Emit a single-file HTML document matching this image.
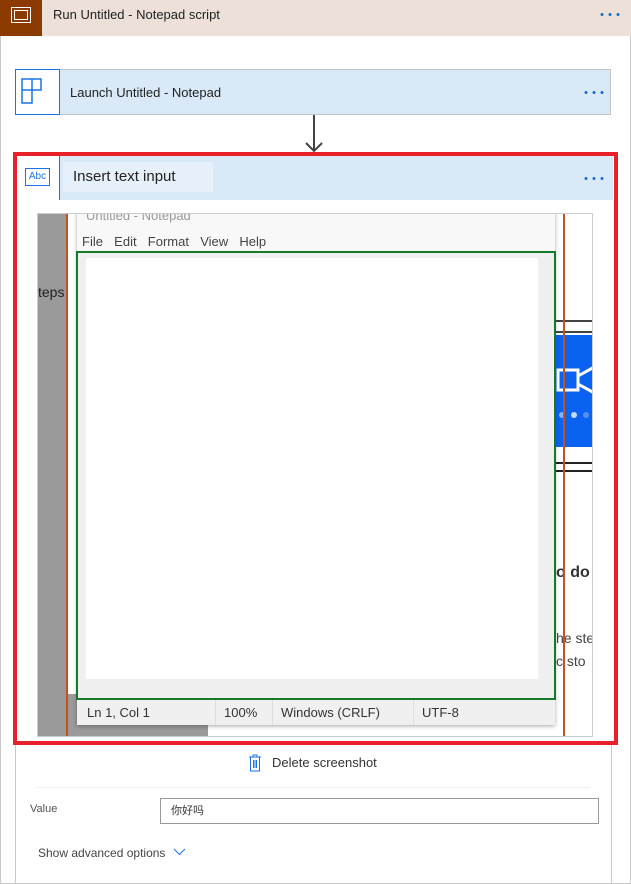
<!DOCTYPE html>
<html><head><meta charset="utf-8"><style>
*{box-sizing:border-box;margin:0;padding:0}
body{width:631px;height:884px;background:#fff;font-family:"Liberation Sans","Noto Sans CJK SC",sans-serif;position:relative;overflow:hidden;color:#333}
.a{position:absolute;white-space:nowrap}
.dots{width:22px;height:3px;background:radial-gradient(circle,#0b6cd0 1.3px,transparent 1.6px) 0 0/8px 3px repeat-x}
</style></head><body>
<div class="a" style="left:0;top:0;width:631px;height:884px;border:1px solid #c8c8c8;border-top:none"></div>
<div class="a" style="left:0;top:0;width:631px;height:36px;background:#ede0d8"></div>
<div class="a" style="left:0;top:0;width:42px;height:36px;background:#8b3a00"></div>
<div class="a" style="left:11px;top:7px;width:20px;height:16px;border:1.5px solid #fff"></div>
<div class="a" style="left:14px;top:10px;width:14px;height:10px;border:1.5px solid #fff"></div>
<div class="a" style="left:53px;top:7px;font-size:13px;color:#222">Run Untitled - Notepad script</div>
<div class="a dots" style="left:598px;top:13px"></div>

<div class="a" style="left:15px;top:69px;width:596px;height:46px;background:#dae9f7;border:1px solid #c4c4c4"></div>
<div class="a" style="left:15px;top:69px;width:45px;height:46px;background:#fff;border:1px solid #1a73e8"></div>
<svg class="a" style="left:21px;top:78px" width="26" height="26"><path d="M1 1H20V12H11V25H1Z M11 1V12 M1 12H11" fill="none" stroke="#1a73e8" stroke-width="1.5"/></svg>
<div class="a" style="left:70px;top:85px;font-size:13px;color:#222">Launch Untitled - Notepad</div>
<div class="a dots" style="left:582px;top:91px"></div>

<div class="a" style="left:313px;top:115px;width:2px;height:35px;background:#444"></div>
<svg class="a" style="left:304px;top:140px" width="20" height="14"><path d="M2 3L10 11L18 3" fill="none" stroke="#444" stroke-width="2"/></svg>

<div class="a" style="left:15px;top:745px;width:597px;height:139px;border-left:1px solid #c8c8c8;border-right:1px solid #c8c8c8;border-bottom:1px solid #c8c8c8"></div>
<div class="a" style="left:17px;top:156px;width:596px;height:44px;background:#dae9f7"></div>
<div class="a" style="left:17px;top:156px;width:43px;height:44px;background:#fff;border-right:1px solid #1a73e8"></div>
<div class="a" style="left:25px;top:168px;width:25px;height:18px;border:1.5px solid #1a73e8;color:#1a73e8;font-size:10px;line-height:15px;text-align:center">Abc</div>
<div class="a" style="left:63px;top:162px;width:150px;height:30px;background:#e6f0fa"></div>
<div class="a" style="left:73px;top:168px;font-size:15px;color:#222">Insert text input</div>
<div class="a dots" style="left:582px;top:177px"></div>

<!-- screenshot -->
<div class="a" style="left:37px;top:213px;width:556px;height:524px;border:1px solid #ccc;overflow:hidden;background:#fff">
 <div class="a" style="left:0;top:0;width:30px;height:524px;background:#9a9a9a"></div>
 <div class="a" style="left:30px;top:480px;width:140px;height:44px;background:#9a9a9a"></div>
 <div class="a" style="left:0;top:70px;font-size:14px;color:#222">teps</div>
 <div class="a" style="left:518px;top:106px;width:40px;height:2px;background:#444"></div>
 <div class="a" style="left:518px;top:117px;width:40px;height:2px;background:#444"></div>
 <div class="a" style="left:515px;top:121px;width:41px;height:112px;background:#0a63f0"></div>
 <svg class="a" style="left:518px;top:150px" width="40" height="60"><path d="M2 6H22V26H2Z M22 12L40 2 M22 20L40 30" fill="none" stroke="#fff" stroke-width="3"/><circle cx="6" cy="51" r="3" fill="#8ab4f8"/><circle cx="18" cy="51" r="3" fill="#c6dafc"/><circle cx="30" cy="51" r="3" fill="#5a8ef0"/></svg>
 <div class="a" style="left:518px;top:248px;width:40px;height:2px;background:#222"></div>
 <div class="a" style="left:518px;top:256px;width:40px;height:2px;background:#222"></div>
 <div class="a" style="left:518px;top:350px;font-size:16px;color:#333;font-weight:bold">o do</div>
 <div class="a" style="left:518px;top:416px;font-size:14px;color:#444">he ste</div>
 <div class="a" style="left:518px;top:439px;font-size:14px;color:#444">c sto</div>
 <div class="a" style="left:28px;top:0;width:2px;height:524px;background:#c8501a"></div>
 <div class="a" style="left:525px;top:0;width:2px;height:524px;background:#c8501a"></div>
 <div class="a" style="left:39px;top:-6px;width:478px;height:517px;background:#f8f8f8;box-shadow:0 1px 4px rgba(0,0,0,.35)"></div>
 <div class="a" style="left:48px;top:-6px;font-size:13px;color:#999">Untitled - Notepad</div>
 <div class="a" style="left:44px;top:20px;font-size:13px;color:#444;word-spacing:2px">File &nbsp;Edit &nbsp;Format &nbsp;View &nbsp;Help</div>
 <div class="a" style="left:38px;top:37px;width:480px;height:449px;border:2.5px solid #137a2a;background:#f0f0f0"></div>
 <div class="a" style="left:48px;top:44px;width:452px;height:421px;background:#fff"></div>
 <div class="a" style="left:39px;top:486px;width:478px;height:25px;background:#f0f0f0;font-size:13px;color:#333;line-height:25px">
  <span class="a" style="left:10px">Ln 1, Col 1</span>
  <span class="a" style="left:138px;top:0;height:25px;border-left:1px solid #ddd;padding-left:8px">100%</span>
  <span class="a" style="left:195px;top:0;height:25px;border-left:1px solid #ddd;padding-left:8px">Windows (CRLF)</span>
  <span class="a" style="left:336px;top:0;height:25px;border-left:1px solid #ddd;padding-left:8px">UTF-8</span>
 </div>
</div>

<div class="a" style="left:13px;top:152px;width:605px;height:593px;border:4px solid #e8202a"></div>

<svg class="a" style="left:248px;top:754px" width="14" height="18"><path d="M1 3H13 M5 3V1H9V3 M2.5 3V17H11.5V3 M5.5 6V14 M7 6V14 M8.5 6V14" fill="none" stroke="#1a73e8" stroke-width="1"/></svg>
<div class="a" style="left:272px;top:755px;font-size:13px;color:#333">Delete screenshot</div>
<div class="a" style="left:37px;top:787px;width:553px;height:1px;background:#eee"></div>
<div class="a" style="left:30px;top:803px;font-size:11px;color:#555">Value</div>
<div class="a" style="left:160px;top:798px;width:439px;height:26px;border:1px solid #999;font-size:11px;line-height:24px;padding-left:10px;color:#333">你好吗</div>
<div class="a" style="left:38px;top:846px;font-size:12px;color:#444">Show advanced options</div>
<svg class="a" style="left:173px;top:848px" width="13" height="8"><path d="M1 1L6.5 6.5L12 1" fill="none" stroke="#1a73e8" stroke-width="1"/></svg>
</body></html>
